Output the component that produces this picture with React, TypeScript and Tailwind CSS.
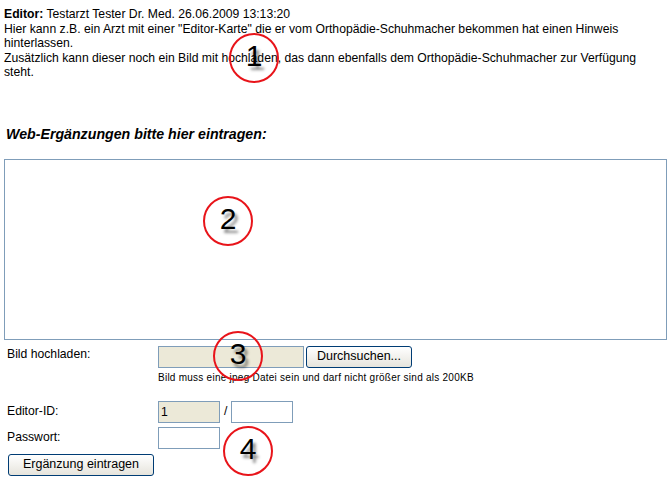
const xpBorder = "border border-[#7f9db9]";

function Marker({ n, className }: { n: string; className: string }) {
  return (
    <div
      className={`absolute w-[50px] h-[50px] rounded-full border-2 border-[#e8141a] flex items-center justify-center ${className}`}
    >
      <span className="text-[30px] leading-none text-black [text-shadow:3px_4px_3px_rgba(0,0,0,0.45)] -mt-1">
        {n}
      </span>
    </div>
  );
}

function XpButton({ children, className }: { children: React.ReactNode; className: string }) {
  return (
    <button
      type="button"
      className={`h-[21px] rounded-[3px] border border-[#003c74] bg-gradient-to-b from-white to-[#e6e4dc] text-[12.5px] leading-none text-black ${className}`}
    >
      {children}
    </button>
  );
}

export default function App() {
  return (
    <div className="relative w-[671px] h-[480px] overflow-hidden bg-white text-black font-['Liberation_Sans',Arial,sans-serif] text-[12.2px]">
      {/* HINWEIS */}
      <div className="pt-[7px] px-[4px] leading-[14.5px]">
        <div>
          <b>Editor:</b> Testarzt Tester Dr. Med. 26.06.2009 13:13:20
        </div>
        <div>
          Hier kann z.B. ein Arzt mit einer "Editor-Karte" die er vom Orthopädie-Schuhmacher bekommen hat einen Hinweis
          hinterlassen.
        </div>
        <div>
          Zusätzlich kann dieser noch ein Bild mit hochladen, das dann ebenfalls dem Orthopädie-Schuhmacher zur Verfügung
          steht.
        </div>
      </div>

      {/* TITEL */}
      <h2 className="mt-[46px] ml-[6px] h-[17px] leading-[17px] text-[14.2px] font-bold italic">
        Web-Ergänzungen bitte hier eintragen:
      </h2>

      {/* TEXTAREA */}
      <div className={`mt-[16px] ml-[4px] w-[663px] h-[181px] ${xpBorder}`}></div>

      {/* BILD */}
      <div className="mt-[6px] flex">
        <div className="w-[158px] pl-[7px] leading-[16px]">Bild hochladen:</div>
        <div>
          <div className="flex">
            <div className={`w-[146px] h-[22px] bg-[#ece9d8] ${xpBorder}`}></div>
            <XpButton className="ml-[2px] w-[106px] h-[22px]">Durchsuchen...</XpButton>
          </div>
          <div className="mt-[4px] text-[10px] leading-[12px] tracking-[0.25px]">
            Bild muss eine jpeg Datei sein und darf nicht größer sind als 200KB
          </div>
        </div>
      </div>

      {/* EDITOR */}
      <div className="mt-[17px] flex items-center">
        <div className="w-[158px] pl-[7px]">Editor-ID:</div>
        <div className={`w-[62px] h-[22px] bg-[#ece9d8] pl-[2px] leading-[20px] ${xpBorder}`}>1</div>
        <span className="ml-[4px] w-[7px]">/</span>
        <div className={`w-[62px] h-[22px] ${xpBorder}`}></div>
      </div>

      <div className="mt-[4px] flex items-center">
        <div className="w-[158px] pl-[7px]">Passwort:</div>
        <div className={`w-[62px] h-[22px] ${xpBorder}`}></div>
      </div>

      <div className="mt-[5px] pl-[8px]">
        <XpButton className="w-[146px] h-[22px]">Ergänzung eintragen</XpButton>
      </div>

      {/* MARKIERUNGEN */}
      <Marker n="1" className="left-[229px] top-[33px]" />
      <Marker n="2" className="left-[203px] top-[196px]" />
      <Marker n="3" className="left-[213px] top-[331px]" />
      <Marker n="4" className="left-[223px] top-[426px]" />
    </div>
  );
}
